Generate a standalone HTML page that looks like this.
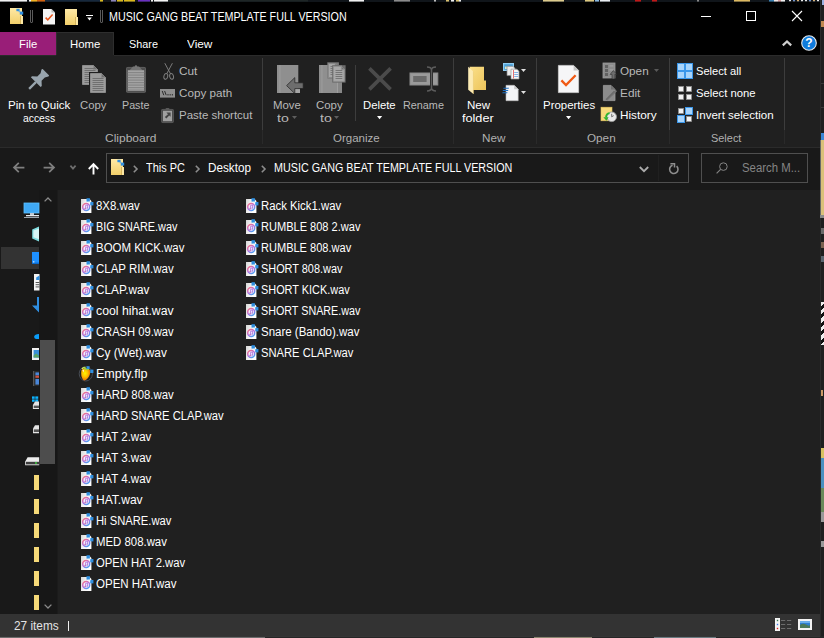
<!DOCTYPE html>
<html><head><meta charset="utf-8"><title>MUSIC GANG BEAT TEMPLATE FULL VERSION</title>
<style>
html,body{margin:0;padding:0;background:#000;overflow:hidden}
body{width:824px;height:638px;position:relative;font-family:"Liberation Sans", sans-serif;}
.a{position:absolute}
.t{position:absolute;white-space:nowrap;line-height:14px;transform-origin:0 0;font-family:"Liberation Sans", sans-serif;}
svg{position:absolute;overflow:visible}
</style></head><body>
<div class="a" style="left:0px;top:0px;width:824px;height:2px;background:#10151a;"></div>
<div class="a" style="left:0px;top:0px;width:27px;height:1px;background:#f2f2f2;"></div>
<div class="a" style="left:0px;top:1px;width:27px;height:1px;background:#f2f2f2;opacity:.55"></div>
<div class="a" style="left:29px;top:0px;width:2px;height:1px;background:#f2f2f2;"></div>
<div class="a" style="left:29px;top:1px;width:2px;height:1px;background:#f2f2f2;opacity:.55"></div>
<div class="a" style="left:31px;top:0px;width:6px;height:1px;background:#f0b020;"></div>
<div class="a" style="left:31px;top:1px;width:6px;height:1px;background:#f0b020;opacity:.55"></div>
<div class="a" style="left:37px;top:0px;width:8px;height:1px;background:#d06010;"></div>
<div class="a" style="left:37px;top:1px;width:8px;height:1px;background:#d06010;opacity:.55"></div>
<div class="a" style="left:45px;top:0px;width:55px;height:1px;background:#16283c;"></div>
<div class="a" style="left:45px;top:1px;width:55px;height:1px;background:#16283c;opacity:.55"></div>
<div class="a" style="left:100px;top:0px;width:3px;height:1px;background:#d8b820;"></div>
<div class="a" style="left:100px;top:1px;width:3px;height:1px;background:#d8b820;opacity:.55"></div>
<div class="a" style="left:111px;top:0px;width:4.5px;height:1px;background:#8a84b8;"></div>
<div class="a" style="left:111px;top:1px;width:4.5px;height:1px;background:#8a84b8;opacity:.55"></div>
<div class="a" style="left:116.5px;top:0px;width:6px;height:1px;background:#d8b820;"></div>
<div class="a" style="left:116.5px;top:1px;width:6px;height:1px;background:#d8b820;opacity:.55"></div>
<div class="a" style="left:124px;top:0px;width:11px;height:1px;background:#dcb81c;"></div>
<div class="a" style="left:124px;top:1px;width:11px;height:1px;background:#dcb81c;opacity:.55"></div>
<div class="a" style="left:137.5px;top:0px;width:12.5px;height:1px;background:#6a30c0;"></div>
<div class="a" style="left:137.5px;top:1px;width:12.5px;height:1px;background:#6a30c0;opacity:.55"></div>
<div class="a" style="left:151px;top:0px;width:1.5px;height:1px;background:#eee;"></div>
<div class="a" style="left:151px;top:1px;width:1.5px;height:1px;background:#eee;opacity:.55"></div>
<div class="a" style="left:154px;top:0px;width:13.5px;height:1px;background:#f4f4f4;"></div>
<div class="a" style="left:154px;top:1px;width:13.5px;height:1px;background:#f4f4f4;opacity:.55"></div>
<div class="a" style="left:167.5px;top:0px;width:140px;height:1px;background:#1e2626;"></div>
<div class="a" style="left:167.5px;top:1px;width:140px;height:1px;background:#1e2626;opacity:.55"></div>
<div class="a" style="left:348.5px;top:0px;width:15px;height:1px;background:#f0f0f0;"></div>
<div class="a" style="left:348.5px;top:1px;width:15px;height:1px;background:#f0f0f0;opacity:.55"></div>
<div class="a" style="left:393.5px;top:0px;width:16px;height:1px;background:#8a8a8a;"></div>
<div class="a" style="left:393.5px;top:1px;width:16px;height:1px;background:#8a8a8a;opacity:.55"></div>
<div class="a" style="left:433.5px;top:0px;width:2px;height:1px;background:#bbb;"></div>
<div class="a" style="left:433.5px;top:1px;width:2px;height:1px;background:#bbb;opacity:.55"></div>
<div class="a" style="left:446px;top:0px;width:3px;height:1px;background:#d8c070;"></div>
<div class="a" style="left:446px;top:1px;width:3px;height:1px;background:#d8c070;opacity:.55"></div>
<div class="a" style="left:451px;top:0px;width:3px;height:1px;background:#eee;"></div>
<div class="a" style="left:451px;top:1px;width:3px;height:1px;background:#eee;opacity:.55"></div>
<div class="a" style="left:456px;top:0px;width:3px;height:1px;background:#d8c070;"></div>
<div class="a" style="left:456px;top:1px;width:3px;height:1px;background:#d8c070;opacity:.55"></div>
<div class="a" style="left:459px;top:0px;width:2px;height:1px;background:#eee;"></div>
<div class="a" style="left:459px;top:1px;width:2px;height:1px;background:#eee;opacity:.55"></div>
<div class="a" style="left:543px;top:0px;width:20.5px;height:1px;background:#dcca8c;"></div>
<div class="a" style="left:543px;top:1px;width:20.5px;height:1px;background:#dcca8c;opacity:.55"></div>
<div class="a" style="left:585px;top:0px;width:9px;height:1px;background:#dcc880;"></div>
<div class="a" style="left:585px;top:1px;width:9px;height:1px;background:#dcc880;opacity:.55"></div>
<div class="a" style="left:595px;top:0px;width:4px;height:1px;background:#8ab8e0;"></div>
<div class="a" style="left:595px;top:1px;width:4px;height:1px;background:#8ab8e0;opacity:.55"></div>
<div class="a" style="left:600px;top:0px;width:10px;height:1px;background:#e8ecf0;"></div>
<div class="a" style="left:600px;top:1px;width:10px;height:1px;background:#e8ecf0;opacity:.55"></div>
<div class="a" style="left:634.5px;top:0px;width:6px;height:1px;background:#c01818;"></div>
<div class="a" style="left:634.5px;top:1px;width:6px;height:1px;background:#c01818;opacity:.55"></div>
<div class="a" style="left:651.5px;top:0px;width:5.5px;height:1px;background:#c01818;"></div>
<div class="a" style="left:651.5px;top:1px;width:5.5px;height:1px;background:#c01818;opacity:.55"></div>
<div class="a" style="left:697px;top:0px;width:2px;height:1px;background:#888;"></div>
<div class="a" style="left:697px;top:1px;width:2px;height:1px;background:#888;opacity:.55"></div>
<div class="a" style="left:734px;top:0px;width:16px;height:1px;background:#dcb860;"></div>
<div class="a" style="left:734px;top:1px;width:16px;height:1px;background:#dcb860;opacity:.55"></div>
<div class="a" style="left:769px;top:0px;width:4.5px;height:1px;background:#3a80b0;"></div>
<div class="a" style="left:769px;top:1px;width:4.5px;height:1px;background:#3a80b0;opacity:.55"></div>
<div class="a" style="left:773.5px;top:0px;width:4px;height:1px;background:#f0e8e8;"></div>
<div class="a" style="left:773.5px;top:1px;width:4px;height:1px;background:#f0e8e8;opacity:.55"></div>
<div class="a" style="left:777.5px;top:0px;width:3px;height:1px;background:#d8a0a0;"></div>
<div class="a" style="left:777.5px;top:1px;width:3px;height:1px;background:#d8a0a0;opacity:.55"></div>
<div class="a" style="left:780.5px;top:0px;width:4.5px;height:1px;background:#f0f0f0;"></div>
<div class="a" style="left:780.5px;top:1px;width:4.5px;height:1px;background:#f0f0f0;opacity:.55"></div>
<div class="a" style="left:789px;top:0px;width:2px;height:1px;background:#e8e8e8;"></div>
<div class="a" style="left:789px;top:1px;width:2px;height:1px;background:#777;opacity:.5"></div>
<div class="a" style="left:793px;top:0px;width:2px;height:1px;background:#6a90d0;"></div>
<div class="a" style="left:793px;top:1px;width:2px;height:1px;background:#777;opacity:.5"></div>
<div class="a" style="left:797px;top:0px;width:2px;height:1px;background:#d8b070;"></div>
<div class="a" style="left:797px;top:1px;width:2px;height:1px;background:#777;opacity:.5"></div>
<div class="a" style="left:801px;top:0px;width:2px;height:1px;background:#e8e8e8;"></div>
<div class="a" style="left:801px;top:1px;width:2px;height:1px;background:#777;opacity:.5"></div>
<div class="a" style="left:805px;top:0px;width:2px;height:1px;background:#e8e8e8;"></div>
<div class="a" style="left:805px;top:1px;width:2px;height:1px;background:#777;opacity:.5"></div>
<div class="a" style="left:809px;top:0px;width:2px;height:1px;background:#6a90d0;"></div>
<div class="a" style="left:809px;top:1px;width:2px;height:1px;background:#777;opacity:.5"></div>
<div class="a" style="left:813px;top:0px;width:2px;height:1px;background:#d8b070;"></div>
<div class="a" style="left:813px;top:1px;width:2px;height:1px;background:#777;opacity:.5"></div>
<div class="a" style="left:817px;top:0px;width:2px;height:1px;background:#e8e8e8;"></div>
<div class="a" style="left:817px;top:1px;width:2px;height:1px;background:#777;opacity:.5"></div>
<div class="a" style="left:820px;top:0px;width:4px;height:638px;background:#1f1f1f;"></div>
<div class="a" style="left:820px;top:0px;width:1px;height:638px;background:#2b2b2b;"></div>
<div class="a" style="left:822px;top:0px;width:2px;height:5px;background:#9ab0e0;"></div>
<div class="a" style="left:821px;top:21px;width:3px;height:6px;background:#c08850;"></div>
<div class="a" style="left:821px;top:83px;width:3px;height:1px;background:#3a3a3a;"></div>
<div class="a" style="left:821px;top:107px;width:3px;height:1px;background:#3a3a3a;"></div>
<div class="a" style="left:821px;top:133px;width:3px;height:7px;background:#3a86d6;"></div>
<div class="a" style="left:821px;top:140px;width:3px;height:75px;background:#d9c07a;"></div>
<div class="a" style="left:820px;top:140px;width:1px;height:75px;background:#6a6a6a;"></div>
<div class="a" style="left:820px;top:215px;width:4px;height:3px;background:#8a8a8a;"></div>
<div class="a" style="left:821px;top:228px;width:3px;height:6px;background:#6a6a6a;"></div>
<div class="a" style="left:821px;top:242px;width:3px;height:6px;background:#7a6250;"></div>
<div class="a" style="left:821px;top:256px;width:3px;height:6px;background:#5a6670;"></div>
<div class="a" style="left:821px;top:302px;width:3px;height:43px;background:repeating-linear-gradient(135deg,#eee 0 3px,#111 3px 6px)"></div>
<div class="a" style="left:821px;top:390px;width:2px;height:6px;background:#c96;"></div>
<div class="a" style="left:821px;top:448px;width:3px;height:10px;background:#d8c060;"></div>
<div class="a" style="left:821px;top:458px;width:3px;height:30px;background:#4a90c0;"></div>
<div class="a" style="left:821px;top:488px;width:3px;height:24px;background:#6a8a5a;"></div>
<div class="a" style="left:821px;top:512px;width:3px;height:10px;background:#999;"></div>
<div class="a" style="left:821px;top:541px;width:3px;height:6px;background:#999;"></div>
<div class="a" style="left:0px;top:636px;width:824px;height:2px;background:#262626;"></div>
<div class="a" style="left:0px;top:636px;width:820px;height:1px;background:#363636;"></div>
<div class="a" style="left:0px;top:637px;width:265px;height:1px;background:#6c6c6c;"></div>
<div class="a" style="left:534px;top:637px;width:58px;height:1px;background:#8a8670;"></div>
<div class="a" style="left:654px;top:637px;width:62px;height:1px;background:#6a7a80;"></div>
<div class="a" style="left:0px;top:2px;width:820px;height:30px;background:#000;"></div>
<div class="a" style="left:0px;top:32px;width:820px;height:23px;background:#000;"></div>
<div class="a" style="left:0px;top:32px;width:56px;height:23px;background:#991e78;"></div>
<div class="a" style="left:56px;top:32px;width:58px;height:24px;background:#202020;box-shadow:inset 1px 1px 0 #2e2e2e, inset -1px 0 0 #2e2e2e"></div>
<div class="a" style="left:0px;top:55px;width:820px;height:92px;background:#202020;"></div>
<div class="a" style="left:0px;top:55px;width:56px;height:1px;background:#2b2b2b;"></div>
<div class="a" style="left:114px;top:55px;width:706px;height:1px;background:#2b2b2b;"></div>
<div class="a" style="left:0px;top:147px;width:820px;height:1px;background:#2b2b2b;"></div>
<div class="a" style="left:0px;top:148px;width:820px;height:42px;background:#191919;"></div>
<div class="a" style="left:0px;top:190px;width:58px;height:424px;background:#191919;"></div>
<div class="a" style="left:58px;top:190px;width:762px;height:424px;background:#202020;"></div>
<div class="a" style="left:0px;top:614px;width:820px;height:22px;background:#333333;"></div>
<svg style="left:10px;top:8px" width="13" height="16" viewBox="0 0 13 16"><defs><linearGradient id="fg10" x1="0" y1="0" x2="0" y2="1"><stop offset="0" stop-color="#ffe9a6"/><stop offset="1" stop-color="#f2cf6a"/></linearGradient></defs><rect x="0" y="0" width="12" height="16" fill="url(#fg10)"/><rect x="10.4" y="8" width="2.6" height="8" fill="#fde8a4"/><rect x="10" y="8" width="0.8" height="8" fill="#cfa94e"/><rect x="6.4" y="0.8" width="3.2" height="2.4" fill="#2f8ee0"/><rect x="9.8" y="3.6" width="3.4" height="3" fill="#2f8ee0"/><rect x="8.6" y="2.8" width="1.6" height="1.4" fill="#69b4f0"/></svg>
<svg style="left:65px;top:9px" width="13" height="16" viewBox="0 0 13 16"><defs><linearGradient id="fg65" x1="0" y1="0" x2="0" y2="1"><stop offset="0" stop-color="#ffe9a6"/><stop offset="1" stop-color="#f2cf6a"/></linearGradient></defs><rect x="0" y="0" width="12" height="16" fill="url(#fg65)"/><rect x="10.4" y="8" width="2.6" height="8" fill="#fde8a4"/><rect x="10" y="8" width="0.8" height="8" fill="#cfa94e"/></svg>
<svg style="left:30px;top:10px" width="3" height="13" viewBox="0 0 3 13"><path d="M0.5 0 V12 Q0.5 12.5 1 12.5 H2 Q2.5 12.5 2.5 12 V0" fill="none" stroke="#5a5a5a" stroke-width="1"/></svg>
<svg style="left:100px;top:10px" width="3" height="13" viewBox="0 0 3 13"><path d="M0.5 0 V12 Q0.5 12.5 1 12.5 H2 Q2.5 12.5 2.5 12 V0" fill="none" stroke="#5a5a5a" stroke-width="1"/></svg>
<svg style="left:43px;top:9px" width="12" height="16" viewBox="0 0 12 16"><path d="M0 0 H8.5 L12 3.5 V15.6 H0 Z" fill="#f4f4f4"/><path d="M8.5 0 V3.5 H12 Z" fill="#b8b8b8"/><path d="M2.6 8.6 L4.8 10.8 L9.6 5.6" fill="none" stroke="#e8541c" stroke-width="1.5"/></svg>
<svg style="left:86px;top:15px" width="7" height="6" viewBox="0 0 7 6"><rect x="0" y="0" width="7" height="1" fill="#fff"/><path d="M1.2 2.6 H5.8 L3.5 5.4 Z" fill="#fff"/></svg>
<svg style="left:701px;top:16px" width="10" height="1" viewBox="0 0 10 1"><rect width="10" height="1" fill="#fff"/></svg>
<svg style="left:746px;top:11px" width="10" height="10" viewBox="0 0 10 10"><rect x="0.5" y="0.5" width="9" height="9" fill="none" stroke="#fff" stroke-width="1"/></svg>
<svg style="left:792px;top:11px" width="10" height="10" viewBox="0 0 10 10"><path d="M0 0 L10 10 M10 0 L0 10" stroke="#fff" stroke-width="1.1" fill="none"/></svg>
<svg style="left:782px;top:40px" width="10" height="6" viewBox="0 0 10 6"><path d="M0.8 5.4 L5 1.4 L9.2 5.4" fill="none" stroke="#cfcfcf" stroke-width="2.2"/></svg>
<svg style="left:801px;top:35px" width="16" height="16" viewBox="0 0 16 16"><circle cx="8" cy="8" r="7.3" fill="#0f7bdc" stroke="#e8e8e8" stroke-width="1.1"/><text x="8" y="12.4" font-family='"Liberation Sans", sans-serif' font-weight="bold" font-size="12" text-anchor="middle" fill="#fff">?</text></svg>
<div class="a" style="left:262px;top:58px;width:1px;height:72px;background:#3d3d3d;"></div>
<div class="a" style="left:262px;top:130px;width:1px;height:14px;background:#2a2a2a;"></div>
<div class="a" style="left:453px;top:58px;width:1px;height:72px;background:#3d3d3d;"></div>
<div class="a" style="left:453px;top:130px;width:1px;height:14px;background:#2a2a2a;"></div>
<div class="a" style="left:536px;top:58px;width:1px;height:72px;background:#3d3d3d;"></div>
<div class="a" style="left:536px;top:130px;width:1px;height:14px;background:#2a2a2a;"></div>
<div class="a" style="left:669px;top:58px;width:1px;height:72px;background:#3d3d3d;"></div>
<div class="a" style="left:669px;top:130px;width:1px;height:14px;background:#2a2a2a;"></div>
<div class="a" style="left:784px;top:58px;width:1px;height:72px;background:#3d3d3d;"></div>
<div class="a" style="left:784px;top:130px;width:1px;height:14px;background:#2a2a2a;"></div>
<div class="a" style="left:355px;top:65px;width:1px;height:56px;background:#3d3d3d;"></div>
<svg style="left:292.2px;top:116.4px" width="5" height="3" viewBox="0 0 5 3"><path d="M0 0 H5 L2.5 3 Z" fill="#5e5e5e"/></svg>
<svg style="left:334px;top:116.4px" width="5" height="3" viewBox="0 0 5 3"><path d="M0 0 H5 L2.5 3 Z" fill="#5e5e5e"/></svg>
<svg style="left:377px;top:116px" width="5.2" height="3.2" viewBox="0 0 5.2 3.2"><path d="M0 0 H5.2 L2.6 3.2 Z" fill="#fff"/></svg>
<svg style="left:565.6px;top:116px" width="5.2" height="3.2" viewBox="0 0 5.2 3.2"><path d="M0 0 H5.2 L2.6 3.2 Z" fill="#fff"/></svg>
<svg style="left:521px;top:69px" width="5" height="3" viewBox="0 0 5 3"><path d="M0 0 H5 L2.5 3 Z" fill="#e0e0e0"/></svg>
<svg style="left:521px;top:91px" width="5" height="3" viewBox="0 0 5 3"><path d="M0 0 H5 L2.5 3 Z" fill="#e0e0e0"/></svg>
<svg style="left:654px;top:68.6px" width="5" height="3" viewBox="0 0 5 3"><path d="M0 0 H5 L2.5 3 Z" fill="#5a5a5a"/></svg>
<svg style="left:29px;top:68px" width="21" height="21" viewBox="0 0 21 21"><g transform="translate(16.8,4.2) rotate(45)" fill="#98a4ad"><path d="M-4.4 0 H4.4 Q4.9 0 4.9 0.6 V1.2 L3 4.4 V9 L6.9 12.6 V14.2 H-6.9 V12.6 L-3 9 V4.4 L-4.9 1.2 V0.6 Q-4.9 0 -4.4 0 Z"/><rect x="-1.15" y="14" width="2.3" height="9.6"/></g></svg>
<svg style="left:82px;top:65px" width="16" height="20" viewBox="0 0 16 20"><path d="M0.5 0.5 H11.5 L15.5 4.5 V19.5 H0.5 Z" fill="#9c9c9c" stroke="#8c8c8c" stroke-width="1"/><path d="M11.5 0.5 V4.5 H15.5" fill="#6f6f6f" stroke="#8c8c8c" stroke-width="0.8"/><rect x="2.5" y="3" width="11" height="1" fill="#707070"/><rect x="2.5" y="5" width="11" height="1" fill="#707070"/><rect x="2.5" y="7" width="11" height="1" fill="#707070"/><rect x="2.5" y="9" width="11" height="1" fill="#707070"/><rect x="2.5" y="11" width="11" height="1" fill="#707070"/><rect x="2.5" y="13" width="11" height="1" fill="#707070"/><rect x="2.5" y="15" width="11" height="1" fill="#707070"/><rect x="2.5" y="17" width="11" height="1" fill="#707070"/></svg>
<svg style="left:90px;top:73px" width="16" height="20" viewBox="0 0 16 20"><rect x="-1" y="-1" width="18" height="22" fill="#202020"/><path d="M0.5 0.5 H11.5 L15.5 4.5 V19.5 H0.5 Z" fill="#9c9c9c" stroke="#8c8c8c" stroke-width="1"/><path d="M11.5 0.5 V4.5 H15.5" fill="#6f6f6f" stroke="#8c8c8c" stroke-width="0.8"/><rect x="2.5" y="5" width="11" height="1" fill="#707070"/><rect x="2.5" y="7" width="11" height="1" fill="#707070"/><rect x="2.5" y="9" width="11" height="1" fill="#707070"/><rect x="2.5" y="11" width="11" height="1" fill="#707070"/><rect x="2.5" y="13" width="11" height="1" fill="#707070"/><rect x="2.5" y="15" width="11" height="1" fill="#707070"/><rect x="2.5" y="17" width="11" height="1" fill="#707070"/></svg>
<svg style="left:126px;top:64px" width="20" height="29" viewBox="0 0 20 29"><rect x="0" y="2.9" width="20" height="25.9" rx="1.6" fill="#4e4e4e"/><rect x="0.5" y="3.4" width="19" height="24.9" rx="1.3" fill="none" stroke="#626262" stroke-width="0.8"/><path d="M3.6 6.2 L7 2.4 H8.6 Q10 -0.6 11.4 2.4 H13 L16.4 6.2 Z" fill="#747474"/><rect x="1.8" y="6.2" width="16.4" height="20.8" fill="#a4a4a4"/><rect x="1.8" y="8" width="16.4" height="1.2" fill="#868686"/><rect x="1.8" y="10.5" width="16.4" height="1.2" fill="#868686"/><rect x="1.8" y="13" width="16.4" height="1.2" fill="#868686"/><rect x="1.8" y="15.5" width="16.4" height="1.2" fill="#868686"/><rect x="1.8" y="18" width="16.4" height="1.2" fill="#868686"/><rect x="1.8" y="20.5" width="16.4" height="1.2" fill="#868686"/><rect x="1.8" y="23" width="16.4" height="1.2" fill="#868686"/><rect x="1.8" y="25.5" width="16.4" height="1.2" fill="#868686"/></svg>
<svg style="left:162.5px;top:63px" width="12" height="17" viewBox="0 0 12 17"><g fill="none" stroke="#808080" stroke-width="0.95"><path d="M1.8 0.2 L7.6 11"/><path d="M9.4 0.2 L3.6 11"/><ellipse cx="2.8" cy="13.4" rx="1.9" ry="2.9" transform="rotate(14 2.8 13.4)"/><ellipse cx="8.6" cy="13.4" rx="1.9" ry="2.9" transform="rotate(-14 8.6 13.4)"/></g></svg>
<svg style="left:160px;top:89px" width="15" height="8.6" viewBox="0 0 15 8.6"><rect width="15" height="8.6" fill="#8e8e8e"/><path d="M2.2 2 L3.8 6.2 M4.6 2 L6.2 6.2" stroke="#2a2a2a" stroke-width="1"/><rect x="7.4" y="5.2" width="1.2" height="1.2" fill="#2a2a2a"/><rect x="9.6" y="5.2" width="1.2" height="1.2" fill="#2a2a2a"/><rect x="11.8" y="5.2" width="1.2" height="1.2" fill="#2a2a2a"/></svg>
<svg style="left:161px;top:107.5px" width="13" height="15.5" viewBox="0 0 13 15.5"><rect x="0.2" y="1" width="12.6" height="14" rx="1.4" fill="#4a4a4a"/><rect x="0.6" y="1.4" width="11.8" height="13.2" rx="1.2" fill="none" stroke="#5c5c5c" stroke-width="0.7"/><rect x="4.6" y="0" width="3.8" height="2" rx="0.8" fill="#5a5a5a"/><rect x="2" y="2.8" width="9" height="10.4" fill="#a0a0a0"/><path d="M5.4 4.6 H9.6 V8.8 L8.2 7.4 L5.4 10.6 L3.8 9 L7 6.2 Z" fill="#444"/></svg>
<svg style="left:277px;top:65px" width="27" height="29" viewBox="0 0 27 29"><rect x="0" y="0" width="21.3" height="28" fill="#8f8f8f"/><rect x="2.4" y="0" width="1" height="28" fill="#9d9d9d"/><rect x="17.8" y="23.4" width="5.2" height="4.6" fill="#a6a6a6"/><path d="M9.6 20.6 L17.8 12.6 V17.8 H26.2 V23.6 H17.8 V28.6 Z" fill="#6d6d6d" stroke="#202020" stroke-width="0.7"/></svg>
<svg style="left:319px;top:63px" width="27" height="30.5" viewBox="0 0 27 30.5"><rect x="0" y="2" width="23" height="28" fill="#8f8f8f"/><rect x="2.4" y="2" width="1" height="28" fill="#9d9d9d"/><rect x="18.6" y="19.4" width="4.4" height="10.6" fill="#878787"/><rect x="18.2" y="19.4" width="0.8" height="10.6" fill="#a4a4a4"/><g transform="translate(9,0)"><rect x="-0.7" y="-0.7" width="11.6" height="16.4" fill="#7a7a7a"/><path d="M0.5 0.5 H7.199999999999999 L9.7 3 V14.5 H0.5 Z" fill="#a6a6a6" stroke="#8a8a8a" stroke-width="1"/><path d="M7.199999999999999 0.5 V3 H9.7" fill="#6f6f6f" stroke="#8a8a8a" stroke-width="0.8"/><rect x="2.5" y="3" width="5.199999999999999" height="1" fill="#787878"/><rect x="2.5" y="5" width="5.199999999999999" height="1" fill="#787878"/><rect x="2.5" y="7" width="5.199999999999999" height="1" fill="#787878"/><rect x="2.5" y="9" width="5.199999999999999" height="1" fill="#787878"/><rect x="2.5" y="11" width="5.199999999999999" height="1" fill="#787878"/></g><g transform="translate(14,3)"><rect x="-0.8" y="-0.8" width="13.4" height="17.4" fill="#6c6c6c"/><path d="M0.5 0.5 H8.4 L11.3 3.4 V15.3 H0.5 Z" fill="#a9a9a9" stroke="#929292" stroke-width="1"/><path d="M8.4 0.5 V3.4 H11.3" fill="#6f6f6f" stroke="#929292" stroke-width="0.8"/><rect x="2.5" y="4" width="6.800000000000001" height="1" fill="#767676"/><rect x="2.5" y="6" width="6.800000000000001" height="1" fill="#767676"/><rect x="2.5" y="8" width="6.800000000000001" height="1" fill="#767676"/><rect x="2.5" y="10" width="6.800000000000001" height="1" fill="#767676"/><rect x="2.5" y="12" width="6.800000000000001" height="1" fill="#767676"/></g></svg>
<svg style="left:368px;top:67px" width="24" height="24" viewBox="0 0 24 24"><path d="M1.4 1.4 L22.6 22.4 M22.6 1.4 L1.4 22.4" stroke="#4b4b4b" stroke-width="3.6" fill="none"/></svg>
<svg style="left:410px;top:66px" width="28" height="26" viewBox="0 0 28 26"><rect x="0" y="7" width="27.8" height="12" fill="#9a9a9a"/><rect x="0" y="7" width="27.8" height="12" fill="none" stroke="#8a8a8a" stroke-width="1"/><rect x="3.2" y="10" width="13.4" height="6" fill="#6a6a6a"/><rect x="20" y="2" width="3" height="22" fill="#202020"/><path d="M17 1 Q21.2 1 21.5 3.8 Q21.8 1 26 1 M21.5 3 V23 M17 25 Q21.2 25 21.5 22.2 Q21.8 25 26 25" fill="none" stroke="#5c5c5c" stroke-width="1.5"/></svg>
<svg style="left:468px;top:66px" width="19" height="29" viewBox="0 0 19 29"><defs><linearGradient id="nf1" x1="0" y1="0" x2="1" y2="1"><stop offset="0" stop-color="#fbe08a"/><stop offset="1" stop-color="#ecc45a"/></linearGradient></defs><path d="M1.6 0.8 H16 V14.4 H18 V24 H4 Z" fill="url(#nf1)"/><path d="M0.2 0.8 L5.4 5.4 V28 L0.2 23.8 Z" fill="#fcebb4"/><path d="M5.4 5.4 V28" stroke="#e9c96e" stroke-width="0.6"/></svg>
<svg style="left:503px;top:63px" width="17" height="16" viewBox="0 0 17 16"><rect x="0" y="0" width="11" height="8" fill="#8fcdf2"/><rect x="1.2" y="1.2" width="8.6" height="5.6" fill="#4a9fd6"/><rect x="2" y="3.6" width="3" height="2.4" fill="#d9e8c8"/><path d="M4 3.3 H10 L12 5.3 V12.6 H4 Z" fill="#ececec" stroke="#8a8a8a" stroke-width="0.7"/><path d="M8 6.2 H14 L16 8.2 V16 H8 Z" fill="#f8f8f8" stroke="#9a9a9a" stroke-width="0.7"/><rect x="10" y="7" width="0.8" height="8.4" fill="#e05050"/><rect x="11.2" y="9" width="4" height="0.8" fill="#6a9fe0"/><rect x="11.2" y="11" width="4" height="0.8" fill="#6a9fe0"/><rect x="11.2" y="13" width="4" height="0.8" fill="#6a9fe0"/></svg>
<svg style="left:503px;top:85px" width="16" height="16" viewBox="0 0 16 16"><path d="M3 0.3 H11.2 L15.2 4.3 V15.7 H3 Z" fill="#f4f5f7" stroke="#b8b8b8" stroke-width="0.6"/><path d="M11.2 0.3 V4.3 H15.2 Z" fill="#c8c8c8"/><rect x="1.6" y="2.8" width="5.4" height="1" fill="#1d6fc4" transform="skewX(-20)"/><rect x="1.8" y="5" width="5.4" height="1" fill="#1d6fc4" transform="skewX(-20)"/><rect x="2.2" y="7.2" width="5" height="1" fill="#1d6fc4" transform="skewX(-20)"/></svg>
<svg style="left:558px;top:65px" width="21" height="28" viewBox="0 0 21 28"><path d="M0.4 0.4 H15.6 L20.6 5.4 V27.6 H0.4 Z" fill="#f6f6f7" stroke="#cfcfcf" stroke-width="0.8"/><path d="M15.6 0.4 V5.4 H20.6 Z" fill="#c4c4c4"/><path d="M3.4 15.4 L8 20 L17.6 10.2" fill="none" stroke="#f05a14" stroke-width="2.3"/></svg>
<svg style="left:603px;top:63px" width="14" height="16" viewBox="0 0 14 16"><rect x="0" y="0" width="12" height="15" fill="#8c8c8c"/><rect x="0" y="0" width="12" height="15" fill="none" stroke="#9c9c9c" stroke-width="0.8"/><rect x="2" y="2" width="3" height="3" fill="#626262"/><rect x="6.4" y="2.4" width="4" height="1" fill="#a8a8a8"/><rect x="2" y="6" width="3" height="3" fill="#626262"/><rect x="6.4" y="6.4" width="4" height="1" fill="#a8a8a8"/><rect x="2" y="10" width="3" height="3" fill="#626262"/><rect x="6.4" y="10.4" width="4" height="1" fill="#a8a8a8"/><path d="M7 11.4 L10.4 7.6 L13.8 11.4 H11.8 V16 H9 V11.4 Z" fill="#6e6e6e" stroke="#202020" stroke-width="0.5"/></svg>
<svg style="left:603px;top:85px" width="15" height="16" viewBox="0 0 15 16"><path d="M0.4 0.4 H8 L12 4.4 V15.6 H0.4 Z" fill="#8c8c8c" stroke="#9c9c9c" stroke-width="0.8"/><path d="M8 0.4 V4.4 H12 Z" fill="#707070"/><path d="M3 14.4 L12.6 4.8 L14 6.2 L4.4 15.4 Z" fill="#757575"/><path d="M3 14.6 L11.4 6.2" stroke="#6a6a6a" stroke-width="1.2"/></svg>
<svg style="left:601px;top:107px" width="17" height="16" viewBox="0 0 17 16"><rect x="0" y="0.2" width="11" height="13.6" fill="#f7da7c"/><rect x="0" y="0.2" width="11" height="13.6" fill="none" stroke="#e8c660" stroke-width="0.6"/><circle cx="10.7" cy="9.8" r="4.8" fill="#e9e9e9" stroke="#9a9a9a" stroke-width="0.9"/><path d="M10.7 6.8 V9.8 L12.7 8.6" stroke="#555" stroke-width="0.8" fill="none"/><path d="M2.4 10.2 L7.6 10.2 L5.4 13.8 Z" fill="#2fb52f"/><path d="M5 10.4 Q5.2 6.8 8.6 6.2" stroke="#2fb52f" stroke-width="1.8" fill="none"/></svg>
<svg style="left:677px;top:63px" width="16" height="16" viewBox="0 0 16 16"><rect x="0.5" y="0.5" width="7" height="7" fill="#a8d4fb" stroke="#3b97ea" stroke-width="1"/><rect x="8.5" y="0.5" width="7" height="7" fill="#a8d4fb" stroke="#3b97ea" stroke-width="1"/><rect x="0.5" y="8.5" width="7" height="7" fill="#a8d4fb" stroke="#3b97ea" stroke-width="1"/><rect x="8.5" y="8.5" width="7" height="7" fill="#a8d4fb" stroke="#3b97ea" stroke-width="1"/></svg>
<svg style="left:677px;top:85px" width="16" height="16" viewBox="0 0 16 16"><rect x="1.5" y="1.5" width="5" height="5" fill="#f2f2f2" stroke="#8f8f8f" stroke-width="0.8"/><rect x="9.5" y="1.5" width="5" height="5" fill="#f2f2f2" stroke="#8f8f8f" stroke-width="0.8"/><rect x="1.5" y="9.5" width="5" height="5" fill="#f2f2f2" stroke="#8f8f8f" stroke-width="0.8"/><rect x="9.5" y="9.5" width="5" height="5" fill="#f2f2f2" stroke="#8f8f8f" stroke-width="0.8"/></svg>
<svg style="left:677px;top:107px" width="16" height="16" viewBox="0 0 16 16"><rect x="1.5" y="1.5" width="5" height="5" fill="#f2f2f2" stroke="#8f8f8f" stroke-width="0.8"/><rect x="8.5" y="0.5" width="7" height="7" fill="#a8d4fb" stroke="#3b97ea" stroke-width="1"/><rect x="0.5" y="8.5" width="7" height="7" fill="#a8d4fb" stroke="#3b97ea" stroke-width="1"/><rect x="9.5" y="9.5" width="5" height="5" fill="#f2f2f2" stroke="#8f8f8f" stroke-width="0.8"/></svg>
<svg style="left:13px;top:162px" width="12" height="11" viewBox="0 0 12 11"><path d="M11.4 5.5 H1.2 M5.8 0.8 L1 5.5 L5.8 10.2" fill="none" stroke="#7f7f7f" stroke-width="1.75"/></svg>
<svg style="left:43px;top:162px" width="12" height="11" viewBox="0 0 12 11"><path d="M0.6 5.5 H10.8 M6.2 0.8 L11 5.5 L6.2 10.2" fill="none" stroke="#7f7f7f" stroke-width="1.75"/></svg>
<svg style="left:69.5px;top:165px" width="6" height="5" viewBox="0 0 6 5"><path d="M0.4 0.6 L3 3.6 L5.6 0.6" fill="none" stroke="#6e6e6e" stroke-width="1.7"/></svg>
<svg style="left:87.5px;top:163px" width="11" height="12" viewBox="0 0 11 12"><path d="M5.5 11.6 V1.4 M0.8 6 L5.5 1.2 L10.2 6" fill="none" stroke="#fff" stroke-width="1.9"/></svg>
<div class="a" style="left:106px;top:153px;width:581px;height:28px;border:1px solid #4f4f4f;background:#191919"></div>
<div class="a" style="left:701px;top:153px;width:105px;height:28px;border:1px solid #4f4f4f;background:#191919"></div>
<div class="a" style="left:658px;top:155px;width:1px;height:26px;background:#202020;"></div>
<svg style="left:111px;top:159px" width="13" height="16" viewBox="0 0 13 16"><defs><linearGradient id="fg111" x1="0" y1="0" x2="0" y2="1"><stop offset="0" stop-color="#ffe9a6"/><stop offset="1" stop-color="#f2cf6a"/></linearGradient></defs><rect x="0" y="0" width="12" height="16" fill="url(#fg111)"/><rect x="10.4" y="8" width="2.6" height="8" fill="#fde8a4"/><rect x="10" y="8" width="0.8" height="8" fill="#cfa94e"/><rect x="6.4" y="0.8" width="3.2" height="2.4" fill="#2f8ee0"/><rect x="9.8" y="3.6" width="3.4" height="3" fill="#2f8ee0"/><rect x="8.6" y="2.8" width="1.6" height="1.4" fill="#69b4f0"/></svg>
<svg style="left:132.5px;top:165px" width="5" height="8" viewBox="0 0 5 8"><path d="M0.8 0.8 L4 4 L0.8 7.2" fill="none" stroke="#8c8c8c" stroke-width="1.6"/></svg>
<svg style="left:194.5px;top:165px" width="5" height="8" viewBox="0 0 5 8"><path d="M0.8 0.8 L4 4 L0.8 7.2" fill="none" stroke="#8c8c8c" stroke-width="1.6"/></svg>
<svg style="left:260.5px;top:165px" width="5" height="8" viewBox="0 0 5 8"><path d="M0.8 0.8 L4 4 L0.8 7.2" fill="none" stroke="#8c8c8c" stroke-width="1.6"/></svg>
<svg style="left:639px;top:166px" width="10" height="7" viewBox="0 0 10 7"><path d="M0.8 1 L5 5.2 L9.2 1" fill="none" stroke="#ababab" stroke-width="1.8"/></svg>
<svg style="left:668px;top:162px" width="12" height="13" viewBox="0 0 12 13"><path d="M8.6 4.2 A4.2 4.2 0 1 1 4.6 3.3" fill="none" stroke="#8e8e8e" stroke-width="1.6"/><path d="M2.4 1.7 H6.5 V5.6" fill="none" stroke="#8e8e8e" stroke-width="1.5"/></svg>
<svg style="left:716px;top:162px" width="12" height="12" viewBox="0 0 12 12"><circle cx="7.4" cy="4.6" r="3.8" fill="none" stroke="#848484" stroke-width="1"/><path d="M4.6 7.4 L0.6 11.4" stroke="#848484" stroke-width="1.1"/></svg>
<div class="a" style="left:1px;top:247px;width:38px;height:22px;background:#333333;"></div>
<div class="a" style="left:39px;top:190px;width:18px;height:424px;background:#171717;"></div>
<div class="a" style="left:57px;top:190px;width:1px;height:424px;background:#1b1b1b;"></div>
<div class="a" style="left:40px;top:340px;width:15px;height:124px;background:#4d4d4d;"></div>
<svg style="left:43.5px;top:196.5px" width="8" height="5" viewBox="0 0 8 5"><path d="M0.6 4.4 L4 1 L7.4 4.4" fill="none" stroke="#8a8a8a" stroke-width="1.3"/></svg>
<svg style="left:43.5px;top:603.5px" width="8" height="5" viewBox="0 0 8 5"><path d="M0.6 0.6 L4 4 L7.4 0.6" fill="none" stroke="#8a8a8a" stroke-width="1.3"/></svg>
<svg style="left:24px;top:203px" width="15" height="15" viewBox="0 0 15 15"><rect x="0" y="0" width="15" height="10" fill="#3fa9f5"/><rect x="0" y="0" width="15" height="10" fill="none" stroke="#5cc0ff" stroke-width="0.8"/><rect x="6" y="10" width="4" height="2" fill="#bfc9d2"/><rect x="2" y="12" width="13" height="1.3" fill="#e6ebf0"/><rect x="0" y="14" width="15" height="1" fill="#9aa4ad"/></svg>
<svg style="left:32px;top:226px" width="7" height="16" viewBox="0 0 7 16"><path d="M0.2 3.4 L7 0.4 V15.6 L0.2 12.4 Z" fill="#7fdde0"/><path d="M1.4 4.6 L7 2.6 V13.2 L1.4 11.2 Z" fill="#d6f5f5"/></svg>
<svg style="left:32px;top:252px" width="7" height="12" viewBox="0 0 7 12"><rect x="0" y="0" width="7" height="12" fill="#1e90ff"/><rect x="0" y="10.6" width="7" height="1.4" fill="#0a6bd0"/><rect x="1" y="9.4" width="1.4" height="1" fill="#fff"/></svg>
<svg style="left:33.5px;top:273.5px" width="5.5" height="16.5" viewBox="0 0 5.5 16.5"><rect width="5.5" height="16.5" fill="#f4f4f4"/><path d="M2.2 3.4 L5.5 1.6 V6 H2.2 Z" fill="#2f8ee0"/><rect x="1.6" y="8" width="3.9" height="1" fill="#555"/><rect x="1.6" y="10.2" width="3.9" height="1" fill="#555"/><rect x="1.6" y="12.4" width="3.9" height="1" fill="#555"/></svg>
<svg style="left:32px;top:297px" width="7" height="15.5" viewBox="0 0 7 15.5"><path d="M5 0 H7 V15.4 L0 8.6 H5 Z" fill="#2f8ee0"/></svg>
<svg style="left:34px;top:333.5px" width="5" height="5" viewBox="0 0 5 5"><path d="M5 0 V5 H2.4 Q0 5 0.2 2.6 Q0.6 0.4 5 0 Z" fill="#0a9cf8"/></svg>
<svg style="left:32px;top:348px" width="7" height="12" viewBox="0 0 7 12"><rect width="7" height="12" fill="#f2f2f2"/><rect x="1.6" y="2" width="5.4" height="7.6" fill="#3a8fd8"/><path d="M1.6 7.4 L4 5.4 L7 7.6 V9.6 H1.6 Z" fill="#5aa36a"/></svg>
<svg style="left:33px;top:371px" width="6" height="15" viewBox="0 0 6 15"><rect width="6" height="15" fill="#2a2a2a"/><rect x="0" y="0" width="1.2" height="15" fill="#555"/><rect x="2.4" y="1.4" width="3.6" height="3" fill="#4a86d8"/><rect x="2.4" y="4.6" width="3.6" height="2.2" fill="#d05040"/><rect x="2.4" y="8" width="3.6" height="5.6" fill="#4a86d8"/></svg>
<svg style="left:32px;top:396px" width="7" height="13.5" viewBox="0 0 7 13.5"><rect x="0" y="0.4" width="2.7" height="2.4" fill="#0db4ff"/><rect x="3.3" y="0.4" width="2.9" height="2.4" fill="#0db4ff"/><rect x="0" y="3.4" width="2.7" height="2.4" fill="#0db4ff"/><rect x="3.3" y="3.4" width="2.9" height="2.4" fill="#0db4ff"/><path d="M0.9 9 L3 5.6 H7 V13 H0.9 Z" fill="#e4e4e4"/><rect x="1.7" y="9.6" width="5.3" height="2.4" fill="#565656"/></svg>
<svg style="left:33px;top:425px" width="6" height="8.4" viewBox="0 0 6 8.4"><path d="M0 3.6 L2 0.2 H6 V8.2 H0 Z" fill="#e4e4e4"/><rect x="0.8" y="4.4" width="5.2" height="2.6" fill="#565656"/></svg>
<svg style="left:24.8px;top:457px" width="14.2" height="8.4" viewBox="0 0 14.2 8.4"><path d="M0.2 4.4 L2.6 0.2 H14.2 V8.2 H0.2 Z" fill="#ececec"/><rect x="1" y="4.8" width="13.2" height="2.6" fill="#3e3e3e"/><rect x="10.2" y="5.2" width="1.6" height="1.6" fill="#3de03d"/></svg>
<div class="a" style="left:34px;top:474.5px;width:5px;height:15px;background:#f6d978;"></div>
<div class="a" style="left:34px;top:498.5px;width:5px;height:15px;background:#f6d978;"></div>
<div class="a" style="left:34px;top:522.5px;width:5px;height:15px;background:#f6d978;"></div>
<div class="a" style="left:34px;top:546.5px;width:5px;height:15px;background:#f6d978;"></div>
<div class="a" style="left:34px;top:570.5px;width:5px;height:15px;background:#f6d978;"></div>
<div class="a" style="left:34px;top:594.5px;width:5px;height:15px;background:#f6d978;"></div>
<svg width="0" height="0" style="left:0;top:0"><defs><linearGradient id="wg" x1="0.15" y1="0" x2="0.85" y2="1"><stop offset="0" stop-color="#f2708a"/><stop offset="0.5" stop-color="#b070e2"/><stop offset="1" stop-color="#3ea4f4"/></linearGradient><linearGradient id="wp" x1="0" y1="0" x2="1" y2="0.4"><stop offset="0" stop-color="#d6d6d6"/><stop offset="0.5" stop-color="#f4f4f4"/><stop offset="1" stop-color="#ffffff"/></linearGradient></defs></svg>
<svg style="left:81px;top:198px" width="13" height="15" viewBox="0 0 13 15"><path d="M0 1 H8.6 L10.4 3 V15 H0 Z" fill="url(#wp)"/><rect x="5.5" y="0.2" width="3.4" height="3.4" fill="#2f8fe0"/><rect x="9.2" y="4" width="3.2" height="3.4" fill="#2f8fe0"/><rect x="7.2" y="3.8" width="2" height="1.2" fill="#eef4fb"/><circle cx="5.2" cy="9.1" r="3.5" fill="#f6eefa" stroke="url(#wg)" stroke-width="1.5"/><path d="M4.6 10.6 V7.4 L6.6 7 V10.2" fill="none" stroke="#a868dc" stroke-width="0.8"/><circle cx="4.1" cy="10.5" r="0.7" fill="#c860a0"/><circle cx="6.1" cy="10.1" r="0.7" fill="#8070e0"/></svg>
<svg style="left:81px;top:219px" width="13" height="15" viewBox="0 0 13 15"><path d="M0 1 H8.6 L10.4 3 V15 H0 Z" fill="url(#wp)"/><rect x="5.5" y="0.2" width="3.4" height="3.4" fill="#2f8fe0"/><rect x="9.2" y="4" width="3.2" height="3.4" fill="#2f8fe0"/><rect x="7.2" y="3.8" width="2" height="1.2" fill="#eef4fb"/><circle cx="5.2" cy="9.1" r="3.5" fill="#f6eefa" stroke="url(#wg)" stroke-width="1.5"/><path d="M4.6 10.6 V7.4 L6.6 7 V10.2" fill="none" stroke="#a868dc" stroke-width="0.8"/><circle cx="4.1" cy="10.5" r="0.7" fill="#c860a0"/><circle cx="6.1" cy="10.1" r="0.7" fill="#8070e0"/></svg>
<svg style="left:81px;top:240px" width="13" height="15" viewBox="0 0 13 15"><path d="M0 1 H8.6 L10.4 3 V15 H0 Z" fill="url(#wp)"/><rect x="5.5" y="0.2" width="3.4" height="3.4" fill="#2f8fe0"/><rect x="9.2" y="4" width="3.2" height="3.4" fill="#2f8fe0"/><rect x="7.2" y="3.8" width="2" height="1.2" fill="#eef4fb"/><circle cx="5.2" cy="9.1" r="3.5" fill="#f6eefa" stroke="url(#wg)" stroke-width="1.5"/><path d="M4.6 10.6 V7.4 L6.6 7 V10.2" fill="none" stroke="#a868dc" stroke-width="0.8"/><circle cx="4.1" cy="10.5" r="0.7" fill="#c860a0"/><circle cx="6.1" cy="10.1" r="0.7" fill="#8070e0"/></svg>
<svg style="left:81px;top:261px" width="13" height="15" viewBox="0 0 13 15"><path d="M0 1 H8.6 L10.4 3 V15 H0 Z" fill="url(#wp)"/><rect x="5.5" y="0.2" width="3.4" height="3.4" fill="#2f8fe0"/><rect x="9.2" y="4" width="3.2" height="3.4" fill="#2f8fe0"/><rect x="7.2" y="3.8" width="2" height="1.2" fill="#eef4fb"/><circle cx="5.2" cy="9.1" r="3.5" fill="#f6eefa" stroke="url(#wg)" stroke-width="1.5"/><path d="M4.6 10.6 V7.4 L6.6 7 V10.2" fill="none" stroke="#a868dc" stroke-width="0.8"/><circle cx="4.1" cy="10.5" r="0.7" fill="#c860a0"/><circle cx="6.1" cy="10.1" r="0.7" fill="#8070e0"/></svg>
<svg style="left:81px;top:282px" width="13" height="15" viewBox="0 0 13 15"><path d="M0 1 H8.6 L10.4 3 V15 H0 Z" fill="url(#wp)"/><rect x="5.5" y="0.2" width="3.4" height="3.4" fill="#2f8fe0"/><rect x="9.2" y="4" width="3.2" height="3.4" fill="#2f8fe0"/><rect x="7.2" y="3.8" width="2" height="1.2" fill="#eef4fb"/><circle cx="5.2" cy="9.1" r="3.5" fill="#f6eefa" stroke="url(#wg)" stroke-width="1.5"/><path d="M4.6 10.6 V7.4 L6.6 7 V10.2" fill="none" stroke="#a868dc" stroke-width="0.8"/><circle cx="4.1" cy="10.5" r="0.7" fill="#c860a0"/><circle cx="6.1" cy="10.1" r="0.7" fill="#8070e0"/></svg>
<svg style="left:81px;top:303px" width="13" height="15" viewBox="0 0 13 15"><path d="M0 1 H8.6 L10.4 3 V15 H0 Z" fill="url(#wp)"/><rect x="5.5" y="0.2" width="3.4" height="3.4" fill="#2f8fe0"/><rect x="9.2" y="4" width="3.2" height="3.4" fill="#2f8fe0"/><rect x="7.2" y="3.8" width="2" height="1.2" fill="#eef4fb"/><circle cx="5.2" cy="9.1" r="3.5" fill="#f6eefa" stroke="url(#wg)" stroke-width="1.5"/><path d="M4.6 10.6 V7.4 L6.6 7 V10.2" fill="none" stroke="#a868dc" stroke-width="0.8"/><circle cx="4.1" cy="10.5" r="0.7" fill="#c860a0"/><circle cx="6.1" cy="10.1" r="0.7" fill="#8070e0"/></svg>
<svg style="left:81px;top:324px" width="13" height="15" viewBox="0 0 13 15"><path d="M0 1 H8.6 L10.4 3 V15 H0 Z" fill="url(#wp)"/><rect x="5.5" y="0.2" width="3.4" height="3.4" fill="#2f8fe0"/><rect x="9.2" y="4" width="3.2" height="3.4" fill="#2f8fe0"/><rect x="7.2" y="3.8" width="2" height="1.2" fill="#eef4fb"/><circle cx="5.2" cy="9.1" r="3.5" fill="#f6eefa" stroke="url(#wg)" stroke-width="1.5"/><path d="M4.6 10.6 V7.4 L6.6 7 V10.2" fill="none" stroke="#a868dc" stroke-width="0.8"/><circle cx="4.1" cy="10.5" r="0.7" fill="#c860a0"/><circle cx="6.1" cy="10.1" r="0.7" fill="#8070e0"/></svg>
<svg style="left:81px;top:345px" width="13" height="15" viewBox="0 0 13 15"><path d="M0 1 H8.6 L10.4 3 V15 H0 Z" fill="url(#wp)"/><rect x="5.5" y="0.2" width="3.4" height="3.4" fill="#2f8fe0"/><rect x="9.2" y="4" width="3.2" height="3.4" fill="#2f8fe0"/><rect x="7.2" y="3.8" width="2" height="1.2" fill="#eef4fb"/><circle cx="5.2" cy="9.1" r="3.5" fill="#f6eefa" stroke="url(#wg)" stroke-width="1.5"/><path d="M4.6 10.6 V7.4 L6.6 7 V10.2" fill="none" stroke="#a868dc" stroke-width="0.8"/><circle cx="4.1" cy="10.5" r="0.7" fill="#c860a0"/><circle cx="6.1" cy="10.1" r="0.7" fill="#8070e0"/></svg>
<svg style="left:79px;top:365px" width="15" height="17" viewBox="0 0 15 17"><defs><radialGradient id="flg" cx="0.42" cy="0.4" r="0.62"><stop offset="0" stop-color="#fff600"/><stop offset="0.5" stop-color="#ffc000"/><stop offset="1" stop-color="#ee6a00"/></radialGradient></defs><ellipse cx="6.8" cy="8.8" rx="6.6" ry="7.2" fill="none" stroke="#474c55" stroke-width="1"/><path d="M2.4 5.2 Q3.6 3 6.6 4 Q9.6 3.2 11 5.2 Q12 9 9 13 Q6.4 16.6 4.2 15 Q1.4 11 2.4 5.2 Z" fill="url(#flg)"/><path d="M2.6 3.6 Q5.2 0.2 7.4 3.2 Q9.4 4.6 11 4.2 Q8.4 6 6.4 4.8 Q4.6 3.4 2.6 3.6 Z" fill="#9acb3c"/><path d="M2.4 3.8 Q4 1.4 6.2 2 Q4.4 2.4 3.4 4.4 Z" fill="#ece66a"/><path d="M3.4 5 L5 4.8 L4.6 7.4 Z" fill="#fff" opacity=".9"/><rect x="7.6" y="1.2" width="3" height="2.8" fill="#2f8fe0"/><rect x="11.2" y="4.6" width="3.2" height="3.4" fill="#2f8fe0"/></svg>
<svg style="left:81px;top:387px" width="13" height="15" viewBox="0 0 13 15"><path d="M0 1 H8.6 L10.4 3 V15 H0 Z" fill="url(#wp)"/><rect x="5.5" y="0.2" width="3.4" height="3.4" fill="#2f8fe0"/><rect x="9.2" y="4" width="3.2" height="3.4" fill="#2f8fe0"/><rect x="7.2" y="3.8" width="2" height="1.2" fill="#eef4fb"/><circle cx="5.2" cy="9.1" r="3.5" fill="#f6eefa" stroke="url(#wg)" stroke-width="1.5"/><path d="M4.6 10.6 V7.4 L6.6 7 V10.2" fill="none" stroke="#a868dc" stroke-width="0.8"/><circle cx="4.1" cy="10.5" r="0.7" fill="#c860a0"/><circle cx="6.1" cy="10.1" r="0.7" fill="#8070e0"/></svg>
<svg style="left:81px;top:408px" width="13" height="15" viewBox="0 0 13 15"><path d="M0 1 H8.6 L10.4 3 V15 H0 Z" fill="url(#wp)"/><rect x="5.5" y="0.2" width="3.4" height="3.4" fill="#2f8fe0"/><rect x="9.2" y="4" width="3.2" height="3.4" fill="#2f8fe0"/><rect x="7.2" y="3.8" width="2" height="1.2" fill="#eef4fb"/><circle cx="5.2" cy="9.1" r="3.5" fill="#f6eefa" stroke="url(#wg)" stroke-width="1.5"/><path d="M4.6 10.6 V7.4 L6.6 7 V10.2" fill="none" stroke="#a868dc" stroke-width="0.8"/><circle cx="4.1" cy="10.5" r="0.7" fill="#c860a0"/><circle cx="6.1" cy="10.1" r="0.7" fill="#8070e0"/></svg>
<svg style="left:81px;top:429px" width="13" height="15" viewBox="0 0 13 15"><path d="M0 1 H8.6 L10.4 3 V15 H0 Z" fill="url(#wp)"/><rect x="5.5" y="0.2" width="3.4" height="3.4" fill="#2f8fe0"/><rect x="9.2" y="4" width="3.2" height="3.4" fill="#2f8fe0"/><rect x="7.2" y="3.8" width="2" height="1.2" fill="#eef4fb"/><circle cx="5.2" cy="9.1" r="3.5" fill="#f6eefa" stroke="url(#wg)" stroke-width="1.5"/><path d="M4.6 10.6 V7.4 L6.6 7 V10.2" fill="none" stroke="#a868dc" stroke-width="0.8"/><circle cx="4.1" cy="10.5" r="0.7" fill="#c860a0"/><circle cx="6.1" cy="10.1" r="0.7" fill="#8070e0"/></svg>
<svg style="left:81px;top:450px" width="13" height="15" viewBox="0 0 13 15"><path d="M0 1 H8.6 L10.4 3 V15 H0 Z" fill="url(#wp)"/><rect x="5.5" y="0.2" width="3.4" height="3.4" fill="#2f8fe0"/><rect x="9.2" y="4" width="3.2" height="3.4" fill="#2f8fe0"/><rect x="7.2" y="3.8" width="2" height="1.2" fill="#eef4fb"/><circle cx="5.2" cy="9.1" r="3.5" fill="#f6eefa" stroke="url(#wg)" stroke-width="1.5"/><path d="M4.6 10.6 V7.4 L6.6 7 V10.2" fill="none" stroke="#a868dc" stroke-width="0.8"/><circle cx="4.1" cy="10.5" r="0.7" fill="#c860a0"/><circle cx="6.1" cy="10.1" r="0.7" fill="#8070e0"/></svg>
<svg style="left:81px;top:471px" width="13" height="15" viewBox="0 0 13 15"><path d="M0 1 H8.6 L10.4 3 V15 H0 Z" fill="url(#wp)"/><rect x="5.5" y="0.2" width="3.4" height="3.4" fill="#2f8fe0"/><rect x="9.2" y="4" width="3.2" height="3.4" fill="#2f8fe0"/><rect x="7.2" y="3.8" width="2" height="1.2" fill="#eef4fb"/><circle cx="5.2" cy="9.1" r="3.5" fill="#f6eefa" stroke="url(#wg)" stroke-width="1.5"/><path d="M4.6 10.6 V7.4 L6.6 7 V10.2" fill="none" stroke="#a868dc" stroke-width="0.8"/><circle cx="4.1" cy="10.5" r="0.7" fill="#c860a0"/><circle cx="6.1" cy="10.1" r="0.7" fill="#8070e0"/></svg>
<svg style="left:81px;top:492px" width="13" height="15" viewBox="0 0 13 15"><path d="M0 1 H8.6 L10.4 3 V15 H0 Z" fill="url(#wp)"/><rect x="5.5" y="0.2" width="3.4" height="3.4" fill="#2f8fe0"/><rect x="9.2" y="4" width="3.2" height="3.4" fill="#2f8fe0"/><rect x="7.2" y="3.8" width="2" height="1.2" fill="#eef4fb"/><circle cx="5.2" cy="9.1" r="3.5" fill="#f6eefa" stroke="url(#wg)" stroke-width="1.5"/><path d="M4.6 10.6 V7.4 L6.6 7 V10.2" fill="none" stroke="#a868dc" stroke-width="0.8"/><circle cx="4.1" cy="10.5" r="0.7" fill="#c860a0"/><circle cx="6.1" cy="10.1" r="0.7" fill="#8070e0"/></svg>
<svg style="left:81px;top:513px" width="13" height="15" viewBox="0 0 13 15"><path d="M0 1 H8.6 L10.4 3 V15 H0 Z" fill="url(#wp)"/><rect x="5.5" y="0.2" width="3.4" height="3.4" fill="#2f8fe0"/><rect x="9.2" y="4" width="3.2" height="3.4" fill="#2f8fe0"/><rect x="7.2" y="3.8" width="2" height="1.2" fill="#eef4fb"/><circle cx="5.2" cy="9.1" r="3.5" fill="#f6eefa" stroke="url(#wg)" stroke-width="1.5"/><path d="M4.6 10.6 V7.4 L6.6 7 V10.2" fill="none" stroke="#a868dc" stroke-width="0.8"/><circle cx="4.1" cy="10.5" r="0.7" fill="#c860a0"/><circle cx="6.1" cy="10.1" r="0.7" fill="#8070e0"/></svg>
<svg style="left:81px;top:534px" width="13" height="15" viewBox="0 0 13 15"><path d="M0 1 H8.6 L10.4 3 V15 H0 Z" fill="url(#wp)"/><rect x="5.5" y="0.2" width="3.4" height="3.4" fill="#2f8fe0"/><rect x="9.2" y="4" width="3.2" height="3.4" fill="#2f8fe0"/><rect x="7.2" y="3.8" width="2" height="1.2" fill="#eef4fb"/><circle cx="5.2" cy="9.1" r="3.5" fill="#f6eefa" stroke="url(#wg)" stroke-width="1.5"/><path d="M4.6 10.6 V7.4 L6.6 7 V10.2" fill="none" stroke="#a868dc" stroke-width="0.8"/><circle cx="4.1" cy="10.5" r="0.7" fill="#c860a0"/><circle cx="6.1" cy="10.1" r="0.7" fill="#8070e0"/></svg>
<svg style="left:81px;top:555px" width="13" height="15" viewBox="0 0 13 15"><path d="M0 1 H8.6 L10.4 3 V15 H0 Z" fill="url(#wp)"/><rect x="5.5" y="0.2" width="3.4" height="3.4" fill="#2f8fe0"/><rect x="9.2" y="4" width="3.2" height="3.4" fill="#2f8fe0"/><rect x="7.2" y="3.8" width="2" height="1.2" fill="#eef4fb"/><circle cx="5.2" cy="9.1" r="3.5" fill="#f6eefa" stroke="url(#wg)" stroke-width="1.5"/><path d="M4.6 10.6 V7.4 L6.6 7 V10.2" fill="none" stroke="#a868dc" stroke-width="0.8"/><circle cx="4.1" cy="10.5" r="0.7" fill="#c860a0"/><circle cx="6.1" cy="10.1" r="0.7" fill="#8070e0"/></svg>
<svg style="left:81px;top:576px" width="13" height="15" viewBox="0 0 13 15"><path d="M0 1 H8.6 L10.4 3 V15 H0 Z" fill="url(#wp)"/><rect x="5.5" y="0.2" width="3.4" height="3.4" fill="#2f8fe0"/><rect x="9.2" y="4" width="3.2" height="3.4" fill="#2f8fe0"/><rect x="7.2" y="3.8" width="2" height="1.2" fill="#eef4fb"/><circle cx="5.2" cy="9.1" r="3.5" fill="#f6eefa" stroke="url(#wg)" stroke-width="1.5"/><path d="M4.6 10.6 V7.4 L6.6 7 V10.2" fill="none" stroke="#a868dc" stroke-width="0.8"/><circle cx="4.1" cy="10.5" r="0.7" fill="#c860a0"/><circle cx="6.1" cy="10.1" r="0.7" fill="#8070e0"/></svg>
<svg style="left:246px;top:198px" width="13" height="15" viewBox="0 0 13 15"><path d="M0 1 H8.6 L10.4 3 V15 H0 Z" fill="url(#wp)"/><rect x="5.5" y="0.2" width="3.4" height="3.4" fill="#2f8fe0"/><rect x="9.2" y="4" width="3.2" height="3.4" fill="#2f8fe0"/><rect x="7.2" y="3.8" width="2" height="1.2" fill="#eef4fb"/><circle cx="5.2" cy="9.1" r="3.5" fill="#f6eefa" stroke="url(#wg)" stroke-width="1.5"/><path d="M4.6 10.6 V7.4 L6.6 7 V10.2" fill="none" stroke="#a868dc" stroke-width="0.8"/><circle cx="4.1" cy="10.5" r="0.7" fill="#c860a0"/><circle cx="6.1" cy="10.1" r="0.7" fill="#8070e0"/></svg>
<svg style="left:246px;top:219px" width="13" height="15" viewBox="0 0 13 15"><path d="M0 1 H8.6 L10.4 3 V15 H0 Z" fill="url(#wp)"/><rect x="5.5" y="0.2" width="3.4" height="3.4" fill="#2f8fe0"/><rect x="9.2" y="4" width="3.2" height="3.4" fill="#2f8fe0"/><rect x="7.2" y="3.8" width="2" height="1.2" fill="#eef4fb"/><circle cx="5.2" cy="9.1" r="3.5" fill="#f6eefa" stroke="url(#wg)" stroke-width="1.5"/><path d="M4.6 10.6 V7.4 L6.6 7 V10.2" fill="none" stroke="#a868dc" stroke-width="0.8"/><circle cx="4.1" cy="10.5" r="0.7" fill="#c860a0"/><circle cx="6.1" cy="10.1" r="0.7" fill="#8070e0"/></svg>
<svg style="left:246px;top:240px" width="13" height="15" viewBox="0 0 13 15"><path d="M0 1 H8.6 L10.4 3 V15 H0 Z" fill="url(#wp)"/><rect x="5.5" y="0.2" width="3.4" height="3.4" fill="#2f8fe0"/><rect x="9.2" y="4" width="3.2" height="3.4" fill="#2f8fe0"/><rect x="7.2" y="3.8" width="2" height="1.2" fill="#eef4fb"/><circle cx="5.2" cy="9.1" r="3.5" fill="#f6eefa" stroke="url(#wg)" stroke-width="1.5"/><path d="M4.6 10.6 V7.4 L6.6 7 V10.2" fill="none" stroke="#a868dc" stroke-width="0.8"/><circle cx="4.1" cy="10.5" r="0.7" fill="#c860a0"/><circle cx="6.1" cy="10.1" r="0.7" fill="#8070e0"/></svg>
<svg style="left:246px;top:261px" width="13" height="15" viewBox="0 0 13 15"><path d="M0 1 H8.6 L10.4 3 V15 H0 Z" fill="url(#wp)"/><rect x="5.5" y="0.2" width="3.4" height="3.4" fill="#2f8fe0"/><rect x="9.2" y="4" width="3.2" height="3.4" fill="#2f8fe0"/><rect x="7.2" y="3.8" width="2" height="1.2" fill="#eef4fb"/><circle cx="5.2" cy="9.1" r="3.5" fill="#f6eefa" stroke="url(#wg)" stroke-width="1.5"/><path d="M4.6 10.6 V7.4 L6.6 7 V10.2" fill="none" stroke="#a868dc" stroke-width="0.8"/><circle cx="4.1" cy="10.5" r="0.7" fill="#c860a0"/><circle cx="6.1" cy="10.1" r="0.7" fill="#8070e0"/></svg>
<svg style="left:246px;top:282px" width="13" height="15" viewBox="0 0 13 15"><path d="M0 1 H8.6 L10.4 3 V15 H0 Z" fill="url(#wp)"/><rect x="5.5" y="0.2" width="3.4" height="3.4" fill="#2f8fe0"/><rect x="9.2" y="4" width="3.2" height="3.4" fill="#2f8fe0"/><rect x="7.2" y="3.8" width="2" height="1.2" fill="#eef4fb"/><circle cx="5.2" cy="9.1" r="3.5" fill="#f6eefa" stroke="url(#wg)" stroke-width="1.5"/><path d="M4.6 10.6 V7.4 L6.6 7 V10.2" fill="none" stroke="#a868dc" stroke-width="0.8"/><circle cx="4.1" cy="10.5" r="0.7" fill="#c860a0"/><circle cx="6.1" cy="10.1" r="0.7" fill="#8070e0"/></svg>
<svg style="left:246px;top:303px" width="13" height="15" viewBox="0 0 13 15"><path d="M0 1 H8.6 L10.4 3 V15 H0 Z" fill="url(#wp)"/><rect x="5.5" y="0.2" width="3.4" height="3.4" fill="#2f8fe0"/><rect x="9.2" y="4" width="3.2" height="3.4" fill="#2f8fe0"/><rect x="7.2" y="3.8" width="2" height="1.2" fill="#eef4fb"/><circle cx="5.2" cy="9.1" r="3.5" fill="#f6eefa" stroke="url(#wg)" stroke-width="1.5"/><path d="M4.6 10.6 V7.4 L6.6 7 V10.2" fill="none" stroke="#a868dc" stroke-width="0.8"/><circle cx="4.1" cy="10.5" r="0.7" fill="#c860a0"/><circle cx="6.1" cy="10.1" r="0.7" fill="#8070e0"/></svg>
<svg style="left:246px;top:324px" width="13" height="15" viewBox="0 0 13 15"><path d="M0 1 H8.6 L10.4 3 V15 H0 Z" fill="url(#wp)"/><rect x="5.5" y="0.2" width="3.4" height="3.4" fill="#2f8fe0"/><rect x="9.2" y="4" width="3.2" height="3.4" fill="#2f8fe0"/><rect x="7.2" y="3.8" width="2" height="1.2" fill="#eef4fb"/><circle cx="5.2" cy="9.1" r="3.5" fill="#f6eefa" stroke="url(#wg)" stroke-width="1.5"/><path d="M4.6 10.6 V7.4 L6.6 7 V10.2" fill="none" stroke="#a868dc" stroke-width="0.8"/><circle cx="4.1" cy="10.5" r="0.7" fill="#c860a0"/><circle cx="6.1" cy="10.1" r="0.7" fill="#8070e0"/></svg>
<svg style="left:246px;top:345px" width="13" height="15" viewBox="0 0 13 15"><path d="M0 1 H8.6 L10.4 3 V15 H0 Z" fill="url(#wp)"/><rect x="5.5" y="0.2" width="3.4" height="3.4" fill="#2f8fe0"/><rect x="9.2" y="4" width="3.2" height="3.4" fill="#2f8fe0"/><rect x="7.2" y="3.8" width="2" height="1.2" fill="#eef4fb"/><circle cx="5.2" cy="9.1" r="3.5" fill="#f6eefa" stroke="url(#wg)" stroke-width="1.5"/><path d="M4.6 10.6 V7.4 L6.6 7 V10.2" fill="none" stroke="#a868dc" stroke-width="0.8"/><circle cx="4.1" cy="10.5" r="0.7" fill="#c860a0"/><circle cx="6.1" cy="10.1" r="0.7" fill="#8070e0"/></svg>
<div class="a" style="left:68px;top:621px;width:1px;height:10px;background:#f0f0f0;"></div>
<svg style="left:775px;top:618px" width="17" height="13" viewBox="0 0 17 13"><rect width="5" height="13" fill="#f4f4f4"/><rect x="1.8" y="1.8" width="1.4" height="1.4" fill="#3a7a5a"/><rect x="1.8" y="5.8" width="1.4" height="1.4" fill="#3a7af0"/><rect x="1.8" y="9.8" width="1.4" height="1.4" fill="#e02020"/><rect x="6" y="2" width="4.2" height="1" fill="#6c6c6c"/><rect x="12" y="2" width="4.2" height="1" fill="#6c6c6c"/><rect x="6" y="6" width="4.2" height="1" fill="#6c6c6c"/><rect x="12" y="6" width="4.2" height="1" fill="#6c6c6c"/><rect x="6" y="10" width="4.2" height="1" fill="#6c6c6c"/><rect x="12" y="10" width="4.2" height="1" fill="#6c6c6c"/></svg>
<svg style="left:798px;top:619px" width="14" height="11" viewBox="0 0 14 11"><rect width="14" height="11" fill="#f4f4f4"/><rect x="2" y="2" width="10" height="7" fill="#2f7fd0"/><path d="M2 6 Q5 3.6 8 5.6 T12 6 V9 H2 Z" fill="#4a7a5a"/><rect x="2" y="2" width="10" height="2" fill="#6ab0ec"/></svg>
<span class="t " style="left:109.15px;top:10px;font-size:12px;color:#fff;transform:scaleX(0.8932)">MUSIC GANG BEAT TEMPLATE FULL VERSION</span>
<span class="t " style="left:18.90px;top:37px;font-size:11.6px;color:#fff;transform:scaleX(0.9712)">File</span>
<span class="t " style="left:69.65px;top:37px;font-size:11.6px;color:#fff;transform:scaleX(0.9826)">Home</span>
<span class="t " style="left:128.90px;top:37px;font-size:11.6px;color:#fff;transform:scaleX(0.9341)">Share</span>
<span class="t " style="left:186.90px;top:37px;font-size:11.6px;color:#fff;transform:scaleX(1.0192)">View</span>
<span class="t " style="left:8.15px;top:98px;font-size:11.6px;color:#fff;transform:scaleX(0.9982)">Pin to Quick</span>
<span class="t " style="left:22.65px;top:111px;font-size:11.6px;color:#fff;transform:scaleX(0.8907)">access</span>
<span class="t " style="left:79.90px;top:98px;font-size:11.6px;color:#b9b9b9;transform:scaleX(0.9750)">Copy</span>
<span class="t " style="left:121.90px;top:98px;font-size:11.6px;color:#b9b9b9;transform:scaleX(0.9239)">Paste</span>
<span class="t " style="left:178.90px;top:64px;font-size:11.6px;color:#b9b9b9;transform:scaleX(1.0196)">Cut</span>
<span class="t " style="left:178.90px;top:86px;font-size:11.6px;color:#b9b9b9;transform:scaleX(1.0055)">Copy path</span>
<span class="t " style="left:178.90px;top:108px;font-size:11.6px;color:#b9b9b9;transform:scaleX(0.9904)">Paste shortcut</span>
<span class="t " style="left:273.15px;top:98px;font-size:11.6px;color:#b9b9b9;transform:scaleX(0.9838)">Move</span>
<span class="t " style="left:277.40px;top:111px;font-size:11.6px;color:#b9b9b9;transform:scaleX(1.2200)">to</span>
<span class="t " style="left:316.15px;top:98px;font-size:11.6px;color:#b9b9b9;transform:scaleX(0.9842)">Copy</span>
<span class="t " style="left:319.90px;top:111px;font-size:11.6px;color:#b9b9b9;transform:scaleX(1.2200)">to</span>
<span class="t " style="left:363.15px;top:98px;font-size:11.6px;color:#fff;transform:scaleX(0.9742)">Delete</span>
<span class="t " style="left:403.15px;top:98px;font-size:11.6px;color:#b9b9b9;transform:scaleX(0.9332)">Rename</span>
<span class="t " style="left:467.15px;top:98px;font-size:11.6px;color:#fff;transform:scaleX(0.9977)">New</span>
<span class="t " style="left:462.40px;top:111px;font-size:11.6px;color:#fff;transform:scaleX(1.0908)">folder</span>
<span class="t " style="left:542.65px;top:98px;font-size:11.6px;color:#fff;transform:scaleX(0.9869)">Properties</span>
<span class="t " style="left:619.90px;top:64px;font-size:11.6px;color:#b9b9b9;transform:scaleX(1.0097)">Open</span>
<span class="t " style="left:619.90px;top:86px;font-size:11.6px;color:#b9b9b9;transform:scaleX(1.0208)">Edit</span>
<span class="t " style="left:619.90px;top:108px;font-size:11.6px;color:#fff;transform:scaleX(1.0159)">History</span>
<span class="t " style="left:696.15px;top:64px;font-size:11.6px;color:#fff;transform:scaleX(0.9597)">Select all</span>
<span class="t " style="left:696.15px;top:86px;font-size:11.6px;color:#fff;transform:scaleX(0.9739)">Select none</span>
<span class="t " style="left:696.15px;top:108px;font-size:11.6px;color:#fff;transform:scaleX(0.9957)">Invert selection</span>
<span class="t " style="left:104.90px;top:131px;font-size:11.6px;color:#b0b0b0;transform:scaleX(1.0358)">Clipboard</span>
<span class="t " style="left:333.15px;top:131px;font-size:11.6px;color:#b0b0b0;transform:scaleX(0.9916)">Organize</span>
<span class="t " style="left:481.90px;top:131px;font-size:11.6px;color:#b0b0b0;transform:scaleX(1.0085)">New</span>
<span class="t " style="left:587.40px;top:131px;font-size:11.6px;color:#b0b0b0;transform:scaleX(1.0097)">Open</span>
<span class="t " style="left:710.90px;top:131px;font-size:11.6px;color:#b0b0b0;transform:scaleX(0.9431)">Select</span>
<span class="t " style="left:145.90px;top:161px;font-size:12px;color:#fff;transform:scaleX(0.9113)">This PC</span>
<span class="t " style="left:208.15px;top:161px;font-size:12px;color:#fff;transform:scaleX(0.9743)">Desktop</span>
<span class="t " style="left:273.90px;top:161px;font-size:12px;color:#fff;transform:scaleX(0.8960)">MUSIC GANG BEAT TEMPLATE FULL VERSION</span>
<span class="t " style="left:741.90px;top:161px;font-size:12px;color:#858585;transform:scaleX(0.9477)">Search M...</span>
<span class="t " style="left:95.65px;top:199px;font-size:12px;color:#fff;transform:scaleX(0.9483)">8X8.wav</span>
<span class="t " style="left:95.65px;top:220px;font-size:12px;color:#fff;transform:scaleX(0.9041)">BIG SNARE.wav</span>
<span class="t " style="left:95.65px;top:241px;font-size:12px;color:#fff;transform:scaleX(0.9537)">BOOM KICK.wav</span>
<span class="t " style="left:95.65px;top:262px;font-size:12px;color:#fff;transform:scaleX(0.9570)">CLAP RIM.wav</span>
<span class="t " style="left:95.65px;top:283px;font-size:12px;color:#fff;transform:scaleX(0.9801)">CLAP.wav</span>
<span class="t " style="left:95.65px;top:304px;font-size:12px;color:#fff;transform:scaleX(1.0211)">cool hihat.wav</span>
<span class="t " style="left:95.65px;top:325px;font-size:12px;color:#fff;transform:scaleX(0.9313)">CRASH 09.wav</span>
<span class="t " style="left:95.65px;top:346px;font-size:12px;color:#fff;transform:scaleX(0.9875)">Cy (Wet).wav</span>
<span class="t " style="left:95.65px;top:367px;font-size:12px;color:#fff;transform:scaleX(1.0463)">Empty.flp</span>
<span class="t " style="left:95.65px;top:388px;font-size:12px;color:#fff;transform:scaleX(0.9466)">HARD 808.wav</span>
<span class="t " style="left:95.65px;top:409px;font-size:12px;color:#fff;transform:scaleX(0.9352)">HARD SNARE CLAP.wav</span>
<span class="t " style="left:95.65px;top:430px;font-size:12px;color:#fff;transform:scaleX(0.9622)">HAT 2.wav</span>
<span class="t " style="left:95.65px;top:451px;font-size:12px;color:#fff;transform:scaleX(0.9622)">HAT 3.wav</span>
<span class="t " style="left:95.65px;top:472px;font-size:12px;color:#fff;transform:scaleX(0.9622)">HAT 4.wav</span>
<span class="t " style="left:95.65px;top:493px;font-size:12px;color:#fff;transform:scaleX(1.0042)">HAT.wav</span>
<span class="t " style="left:95.65px;top:514px;font-size:12px;color:#fff;transform:scaleX(0.9345)">Hi SNARE.wav</span>
<span class="t " style="left:95.65px;top:535px;font-size:12px;color:#fff;transform:scaleX(0.9491)">MED 808.wav</span>
<span class="t " style="left:95.65px;top:556px;font-size:12px;color:#fff;transform:scaleX(0.9392)">OPEN HAT 2.wav</span>
<span class="t " style="left:95.65px;top:577px;font-size:12px;color:#fff;transform:scaleX(0.9595)">OPEN HAT.wav</span>
<span class="t " style="left:260.90px;top:199px;font-size:12px;color:#fff;transform:scaleX(0.9462)">Rack Kick1.wav</span>
<span class="t " style="left:260.90px;top:220px;font-size:12px;color:#fff;transform:scaleX(0.9200)">RUMBLE 808 2.wav</span>
<span class="t " style="left:260.90px;top:241px;font-size:12px;color:#fff;transform:scaleX(0.9195)">RUMBLE 808.wav</span>
<span class="t " style="left:260.90px;top:262px;font-size:12px;color:#fff;transform:scaleX(0.9084)">SHORT 808.wav</span>
<span class="t " style="left:260.90px;top:283px;font-size:12px;color:#fff;transform:scaleX(0.9084)">SHORT KICK.wav</span>
<span class="t " style="left:260.90px;top:304px;font-size:12px;color:#fff;transform:scaleX(0.8961)">SHORT SNARE.wav</span>
<span class="t " style="left:260.90px;top:325px;font-size:12px;color:#fff;transform:scaleX(0.9578)">Snare (Bando).wav</span>
<span class="t " style="left:260.90px;top:346px;font-size:12px;color:#fff;transform:scaleX(0.9319)">SNARE CLAP.wav</span>
<span class="t " style="left:13.65px;top:619px;font-size:12px;color:#e4e4e4;transform:scaleX(0.9844)">27 items</span>
</body></html>
